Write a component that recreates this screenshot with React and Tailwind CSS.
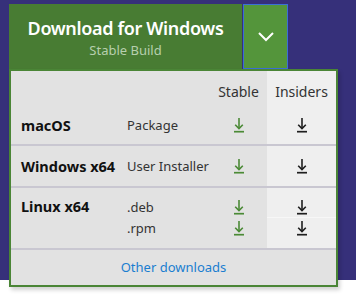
import React from 'react';

const FONT = "font-['Segoe_UI','Noto_Sans',sans-serif]";

function DownloadIcon({ className }) {
  return (
    <svg width="10" height="15" viewBox="0 0 10 15" fill="none" className={className}>
      <path d="M5 0V10.6" stroke="currentColor" strokeWidth="1.6" />
      <path d="M1.2 6.8L5 10.6L8.8 6.8" stroke="currentColor" strokeWidth="1.6" />
      <path d="M0 13.7H10" stroke="currentColor" strokeWidth="1.7" />
    </svg>
  );
}

const rows = [
  { os: 'macOS', files: ['Package'], h: 'h-[38px]', align: 'items-center' },
  { os: 'Windows x64', files: ['User Installer'], h: 'h-[40px]', align: 'items-center' },
  { os: 'Linux x64', files: ['.deb', '.rpm'], h: 'h-[60px]', align: 'items-start pt-[8px]' }
];

export default function App() {
  return (
    <div className={`w-[356px] h-[303px] bg-white relative ${FONT}`}>
      <div className="h-[280px] bg-[#36307a] pt-1 pl-[9px]">
        {/* Button group */}
        <div className="flex">
          <button className="w-[233px] h-[65px] bg-[#487c33] flex flex-col items-center justify-center pt-[2px]">
            <span className="text-[18px] font-semibold text-white leading-6 tracking-[-0.35px]">Download for Windows</span>
            <span className="text-[13px] text-[#b7cfae] leading-5">Stable Build</span>
          </button>
          <button className="ml-px w-[45px] h-[65px] bg-[#54953b] border border-[#3b6fd6] flex items-center justify-center">
            <svg width="16" height="10" viewBox="0 0 16 10" fill="none">
              <path d="M1 1L8 8L15 1" stroke="white" strokeWidth="2" />
            </svg>
          </button>
        </div>
      </div>

      {/* Dropdown panel */}
      <div className="absolute left-[9px] top-[69px] w-[329px] h-[218px] border-2 border-[#4a8536] bg-[#e2e2e2] shadow-[2px_3px_4px_rgba(0,0,0,0.18)]">
        <div className="flex h-[35px] text-[14px] text-[#333]">
          <div className="w-[199px]" />
          <div className="w-[57px] flex items-end justify-center pb-[4px]">Stable</div>
          <div className="w-[69px] bg-[#efefef] flex items-end justify-center pb-[4px]">Insiders</div>
        </div>
        {rows.map((r) => (
          <div key={r.os} className="flex border-b-2 border-[#c9c7d1]">
            <div className={`w-[116px] pl-[10px] flex text-[14.5px] font-bold text-[#111] leading-[21px] ${r.align} ${r.h}`}>
              {r.os}
            </div>
            <div className={`w-[83px] flex flex-col justify-center text-[13px] text-[#333] leading-[21px] ${r.h}`}>
              {r.files.map((f) => (
                <span key={f}>{f}</span>
              ))}
            </div>
            <div className={`w-[57px] flex flex-col justify-center items-center ${r.h}`}>
              {r.files.map((f) => (
                <div key={f} className="h-[21px] flex items-center">
                  <DownloadIcon className="text-[#4b8a36]" />
                </div>
              ))}
            </div>
            <div className={`w-[69px] bg-[#efefef] flex flex-col justify-center items-center ${r.h}`}>
              {r.files.map((f, i) => (
                <div key={f} className={`h-[21px] w-full flex items-center justify-center ${i < r.files.length - 1 ? 'border-b border-[#f7f7f7]' : ''}`}>
                  <DownloadIcon className="text-[#1f1f1f]" />
                </div>
              ))}
            </div>
          </div>
        ))}
        <div className="h-[35px] flex items-center justify-center">
          <a className="text-[13px] text-[#1a7ed0]">Other downloads</a>
        </div>
      </div>
    </div>
  );
}
